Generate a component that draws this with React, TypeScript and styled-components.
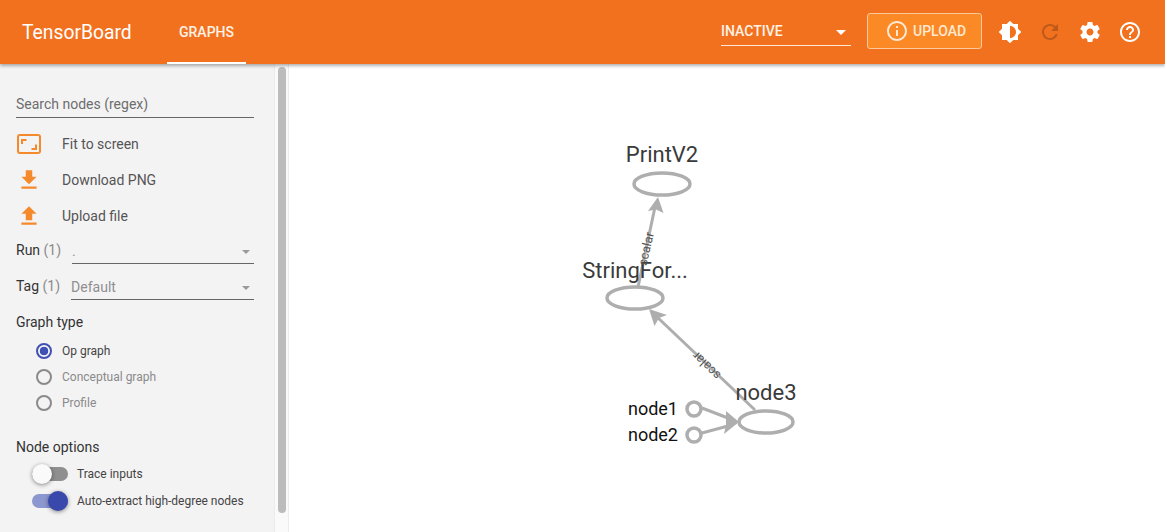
import * as React from 'react'
import styled, { createGlobalStyle } from 'styled-components'

const Global = createGlobalStyle`
  html, body {
    margin: 0;
    height: 100%;
    overflow: hidden;
    background: #ffffff;
    font-family: Roboto, "Noto Sans", sans-serif;
  }
  #root {
    height: 100%;
  }
`

const ICONS = {
  download: 'M19 9h-4V3H9v6H5l7 7 7-7zM5 18v2h14v-2H5z',
  upload: 'M9 16h6v-6h4l-7-7-7 7h4zm-4 2h14v2H5z',
  info: 'M11 7h2v2h-2zm0 4h2v6h-2zm1-9C6.48 2 2 6.48 2 12s4.48 10 10 10 10-4.48 10-10S17.52 2 12 2zm0 18c-4.41 0-8-3.59-8-8s3.59-8 8-8 8 3.59 8 8-3.59 8-8 8z',
  brightness:
    'M20 15.31L23.31 12 20 8.69V4h-4.69L12 .69 8.69 4H4v4.69L.69 12 4 15.31V20h4.69L12 23.31 15.31 20H20v-4.69zM12 18V6c3.31 0 6 2.69 6 6s-2.69 6-6 6z',
  refresh:
    'M17.65 6.35C16.2 4.9 14.21 4 12 4c-4.42 0-7.99 3.58-7.99 8s3.57 8 7.99 8c3.73 0 6.84-2.55 7.73-6h-2.08c-.82 2.33-3.04 4-5.65 4-3.31 0-6-2.69-6-6s2.69-6 6-6c1.66 0 3.14.69 4.22 1.78L13 11h7V4l-2.35 2.35z',
  settings:
    'M19.43 12.98c.04-.32.07-.64.07-.98s-.03-.66-.07-.98l2.11-1.65c.19-.15.24-.42.12-.64l-2-3.46c-.12-.22-.39-.3-.61-.22l-2.49 1c-.52-.4-1.08-.73-1.69-.98l-.38-2.65C14.46 2.18 14.25 2 14 2h-4c-.25 0-.46.18-.49.42l-.38 2.65c-.61.25-1.17.59-1.69.98l-2.49-1c-.23-.09-.49 0-.61.22l-2 3.46c-.13.22-.07.49.12.64l2.11 1.65c-.04.32-.07.65-.07.98s.03.66.07.98l-2.11 1.65c-.19.15-.24.42-.12.64l2 3.46c.12.22.39.3.61.22l2.49-1c.52.4 1.08.73 1.69.98l.38 2.65c.03.24.24.42.49.42h4c.25 0 .46-.18.49-.42l.38-2.65c.61-.25 1.17-.59 1.69-.98l2.49 1c.23.09.49 0 .61-.22l2-3.46c.12-.22.07-.49-.12-.64l-2.11-1.65zM12 15.5c-1.93 0-3.5-1.57-3.5-3.5s1.57-3.5 3.5-3.5 3.5 1.57 3.5 3.5-1.57 3.5-3.5 3.5z',
  help: 'M11 18h2v-2h-2v2zm1-16C6.48 2 2 6.48 2 12s4.48 10 10 10 10-4.48 10-10S17.52 2 12 2zm0 18c-4.41 0-8-3.59-8-8s3.59-8 8-8 8 3.59 8 8-3.59 8-8 8zm0-14c-2.21 0-4 1.79-4 4h2c0-1.1.9-2 2-2s2 .9 2 2c0 2-3 1.75-3 5h2c0-2.25 3-2.5 3-5 0-2.21-1.79-4-4-4z',
}

type IconProps = {
  name: keyof typeof ICONS
  size?: number
  color?: string
}

const Icon: React.FC<IconProps> = ({ name, size = 24, color = 'currentColor' }) => (
  <svg width={size} height={size} viewBox="0 0 24 24" fill={color}>
    <path d={ICONS[name]} />
  </svg>
)

const FitIcon = () => (
  <svg width={26} height={22} viewBox="0 0 26 22" fill="none">
    <rect x="2" y="2" width="22" height="18" rx="2" stroke="#f58a2c" strokeWidth="2" />
    <path d="M6 11V7h4.5M20 11.5V16h-4.5" stroke="#f58a2c" strokeWidth="2" />
  </svg>
)

const Graph = () => (
  <GraphSvg viewBox="289 64 876 468">
    <g fill="none" stroke="#aeaeae" strokeWidth="3">
      <path d="M638 287L655 207" />
      <path d="M755 410L656 316" />
      <path d="M702 408L728 418" />
      <path d="M702 433L728 426" />
    </g>
    <g fill="none" stroke="#aeaeae" strokeWidth="3.5">
      <ellipse cx="662" cy="184" rx="28" ry="11" />
      <ellipse cx="635" cy="298" rx="28" ry="11" />
      <ellipse cx="766" cy="422" rx="27" ry="11" />
      <circle cx="694" cy="409" r="7" />
      <circle cx="694" cy="435" r="7" />
    </g>
    <g fill="#aeaeae">
      <polygon points="658,197 663.5,213 656,209.5 648,211" />
      <polygon points="649,309 667,315 659,318 654.5,326" />
      <polygon points="739,422 724,434 726,424 726,411" />
    </g>
    <NodeLabel x="662" y="162">PrintV2</NodeLabel>
    <NodeLabel x="635" y="278">StringFor...</NodeLabel>
    <NodeLabel x="766" y="400">node3</NodeLabel>
    <InputLabel x="678" y="415">node1</InputLabel>
    <InputLabel x="678" y="441">node2</InputLabel>
    <EdgeLabel transform="translate(647 249) rotate(-77)">scalar</EdgeLabel>
    <EdgeLabel transform="translate(707 365) rotate(224)">scalar</EdgeLabel>
  </GraphSvg>
)

const App: React.FC = () => {
  return (
    <Page>
      <Global />
      <Header>
        <Brand>TensorBoard</Brand>
        <Tab>GRAPHS</Tab>
        <HeaderRight>
          <PluginSelect>
            INACTIVE
            <Caret />
          </PluginSelect>
          <UploadButton>
            <Icon name="info" size={24} />
            UPLOAD
          </UploadButton>
          <HeaderIcons>
            <HeaderIcon><Icon name="brightness" /></HeaderIcon>
            <HeaderIcon $dim><Icon name="refresh" /></HeaderIcon>
            <HeaderIcon><Icon name="settings" /></HeaderIcon>
            <HeaderIcon><Icon name="help" /></HeaderIcon>
          </HeaderIcons>
        </HeaderRight>
      </Header>
      <Body>
        <Sidebar>
          <Controls>
            <Search>Search nodes (regex)</Search>
            <Actions>
              <ActionRow>
                <ActionIcon><FitIcon /></ActionIcon>
                Fit to screen
              </ActionRow>
              <ActionRow>
                <ActionIcon><Icon name="download" size={26} color="#f58a2c" /></ActionIcon>
                Download PNG
              </ActionRow>
              <ActionRow>
                <ActionIcon><Icon name="upload" size={26} color="#f58a2c" /></ActionIcon>
                Upload file
              </ActionRow>
            </Actions>
            <SelectRow $first>
              <span>Run <Count>(1)</Count></span>
              <SelectField>
                .
                <SmallCaret />
              </SelectField>
            </SelectRow>
            <SelectRow>
              <span>Tag <Count>(1)</Count></span>
              <SelectField>
                Default
                <SmallCaret />
              </SelectField>
            </SelectRow>
            <SectionTitle>Graph type</SectionTitle>
            <RadioList>
              <RadioRow>
                <Radio $checked />
                Op graph
              </RadioRow>
              <RadioRow $muted>
                <Radio />
                Conceptual graph
              </RadioRow>
              <RadioRow $muted>
                <Radio />
                Profile
              </RadioRow>
            </RadioList>
            <SectionTitle $spaced>Node options</SectionTitle>
            <ToggleList>
              <ToggleRow>
                <Toggle>
                  <ToggleThumb />
                </Toggle>
                Trace inputs
              </ToggleRow>
              <ToggleRow>
                <Toggle $on>
                  <ToggleThumb $on />
                </Toggle>
                Auto-extract high-degree nodes
              </ToggleRow>
            </ToggleList>
          </Controls>
          <ScrollGutter>
            <ScrollThumb />
          </ScrollGutter>
        </Sidebar>
        <Main>
          <Graph />
        </Main>
      </Body>
    </Page>
  )
}

const Page = styled.div`
  display: flex;
  flex-direction: column;
  height: 100%;
`
const Header = styled.header`
  position: relative;
  z-index: 2;
  flex: none;
  display: flex;
  align-items: center;
  height: 64px;
  padding-left: 22px;
  color: #ffffff;
  background-color: #f2711f;
  box-shadow: 0 2px 3px rgba(0, 0, 0, 0.3);
`
const Brand = styled.div`
  width: 145px;
  font-size: 19.3px;
  font-weight: 400;
  white-space: nowrap;
`
const Tab = styled.div`
  display: flex;
  align-items: center;
  justify-content: center;
  box-sizing: border-box;
  align-self: stretch;
  width: 79px;
  padding-top: 2px;
  font-size: 14px;
  font-weight: 500;
  color: #fff2e6;
  border-bottom: 2px solid #ffffff;
`
const HeaderRight = styled.div`
  display: flex;
  align-items: center;
  margin-left: auto;
`
const PluginSelect = styled.div`
  position: relative;
  box-sizing: border-box;
  width: 130px;
  height: 30px;
  margin-bottom: 3px;
  padding-top: 7px;
  font-size: 14px;
  font-weight: 500;
  color: #fff2e6;
  border-bottom: 1px solid #ffe9d6;
`
const Caret = styled.span`
  position: absolute;
  right: 5px;
  top: 14px;
  border-left: 5px solid transparent;
  border-right: 5px solid transparent;
  border-top: 5px solid #ffffff;
`
const UploadButton = styled.div`
  display: flex;
  align-items: center;
  gap: 4px;
  box-sizing: border-box;
  width: 115px;
  height: 36px;
  margin-left: 16px;
  margin-bottom: 2px;
  padding-left: 17px;
  font-size: 14px;
  font-weight: 500;
  color: #ffe8d2;
  background-color: #fb8a26;
  border: 1px solid #fcc99a;
  border-radius: 3px;
`
const HeaderIcons = styled.div`
  display: flex;
  align-items: center;
  gap: 16px;
  margin-left: 16px;
  padding-right: 23px;
`
const HeaderIcon = styled.div<{ $dim?: boolean }>`
  display: flex;
  width: 24px;
  height: 24px;
  color: ${props => (props.$dim ? '#bd5a1a' : '#ffffff')};
`
const Body = styled.div`
  flex: 1;
  display: flex;
  min-height: 0;
`
const Sidebar = styled.aside`
  flex: none;
  display: flex;
  width: 289px;
  box-sizing: border-box;
  background-color: #fbfafa;
  border-right: 1px solid #ececec;
`
const Controls = styled.div`
  box-sizing: border-box;
  width: 275px;
  padding: 0 20px 0 16px;
  color: #444444;
  background-color: #f4f3f4;
  border-right: 1px solid #ebebeb;
  font-size: 14px;
  overflow: hidden;
`
const Search = styled.div`
  box-sizing: border-box;
  height: 54px;
  padding-top: 32px;
  font-size: 14px;
  color: #6d6d6d;
  border-bottom: 1px solid #666666;
`
const Actions = styled.div`
  display: flex;
  flex-direction: column;
  margin-top: 8px;
`
const ActionRow = styled.div`
  display: flex;
  align-items: center;
  height: 36px;
  color: #555555;
`
const ActionIcon = styled.div`
  display: flex;
  justify-content: center;
  align-items: center;
  width: 26px;
  margin-right: 20px;
`
const SelectRow = styled.div<{ $first?: boolean }>`
  display: flex;
  align-items: flex-end;
  gap: 11px;
  height: ${props => (props.$first ? '30px' : '36px')};
  white-space: nowrap;
  color: #333333;
  & > span {
    padding-bottom: 6px;
  }
`
const Count = styled.span`
  color: #8a8a8a;
`
const SelectField = styled.div`
  position: relative;
  flex: 1;
  box-sizing: border-box;
  height: 30px;
  padding-top: 9px;
  color: #8f8f8f;
  border-bottom: 1px solid #666666;
`
const SmallCaret = styled.span`
  position: absolute;
  right: 4px;
  top: 16px;
  border-left: 4px solid transparent;
  border-right: 4px solid transparent;
  border-top: 4px solid #9a9a9a;
`
const SectionTitle = styled.div<{ $spaced?: boolean }>`
  margin-top: ${props => (props.$spaced ? '23px' : '14px')};
  font-size: 14px;
  line-height: 16px;
  color: #333333;
`
const RadioList = styled.div`
  display: flex;
  flex-direction: column;
  margin-top: 8px;
  padding-left: 20px;
`
const RadioRow = styled.div<{ $muted?: boolean }>`
  display: flex;
  align-items: center;
  gap: 10px;
  height: 26px;
  font-size: 12px;
  color: ${props => (props.$muted ? '#8a8a8a' : '#444444')};
`
const Radio = styled.span<{ $checked?: boolean }>`
  box-sizing: border-box;
  width: 16px;
  height: 16px;
  border-radius: 50%;
  border: 2px solid ${props => (props.$checked ? '#3f51b5' : '#8a8a8a')};
  background: ${props =>
    props.$checked
      ? 'radial-gradient(circle, #3f51b5 0, #3f51b5 4px, transparent 4.6px)'
      : 'transparent'};
`
const ToggleList = styled.div`
  display: flex;
  flex-direction: column;
  gap: 7px;
  margin-top: 9px;
  padding-left: 16px;
`
const ToggleRow = styled.div`
  display: flex;
  align-items: center;
  gap: 9px;
  height: 20px;
  font-size: 12px;
  white-space: nowrap;
  color: #444444;
`
const Toggle = styled.div<{ $on?: boolean }>`
  position: relative;
  flex: none;
  width: 36px;
  height: 14px;
  border-radius: 7px;
  background-color: ${props => (props.$on ? '#8c97d0' : '#8f8f8f')};
`
const ToggleThumb = styled.span<{ $on?: boolean }>`
  position: absolute;
  top: -3px;
  left: ${props => (props.$on ? '16px' : '0')};
  width: 20px;
  height: 20px;
  border-radius: 50%;
  background-color: ${props => (props.$on ? '#3949ab' : '#fafafa')};
  box-shadow: 0 1px 4px rgba(0, 0, 0, 0.45);
`
const ScrollGutter = styled.div`
  flex: 1;
  padding: 3px 2px 0 3px;
`
const ScrollThumb = styled.div`
  height: 446px;
  width: 8px;
  border-radius: 4px;
  background-color: #bcbcbc;
`
const Main = styled.main`
  flex: 1;
  min-width: 0;
  background-color: #ffffff;
`
const GraphSvg = styled.svg`
  display: block;
  width: 100%;
  height: 100%;
`
const NodeLabel = styled.text`
  font-family: Roboto, sans-serif;
  font-size: 22px;
  text-anchor: middle;
  fill: #3a3a3a;
`
const InputLabel = styled.text`
  font-family: Roboto, sans-serif;
  font-size: 18px;
  text-anchor: end;
  fill: #111111;
`
const EdgeLabel = styled.text`
  font-family: Roboto, sans-serif;
  font-size: 12.5px;
  text-anchor: middle;
  dominant-baseline: middle;
  fill: #555555;
`

export default App
